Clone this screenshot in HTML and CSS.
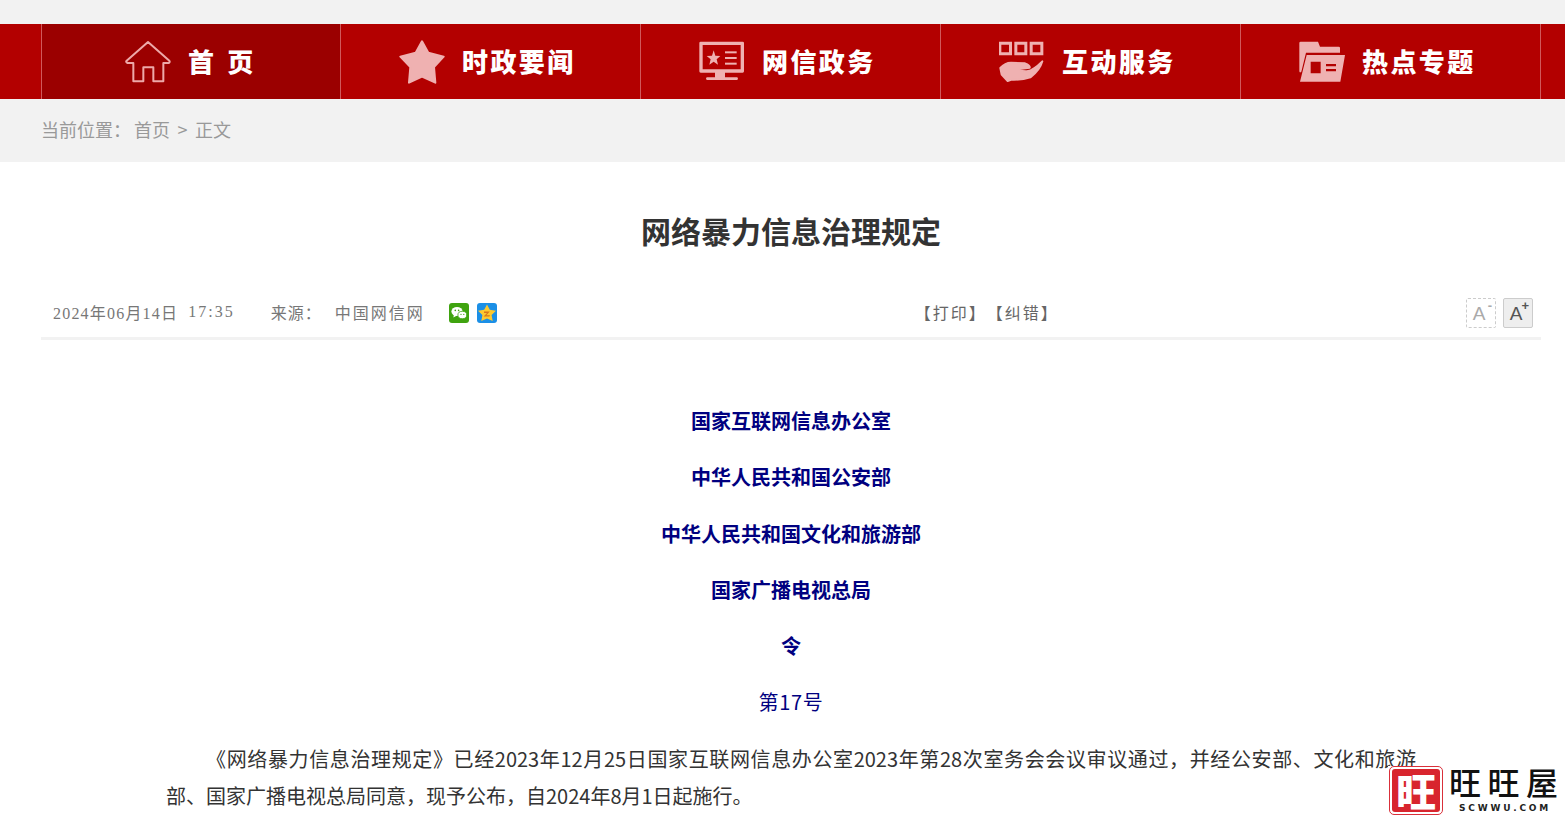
FILE: index.html
```html
<!DOCTYPE html>
<html lang="zh-CN">
<head>
<meta charset="utf-8">
<title>网络暴力信息治理规定</title>
<link rel="stylesheet" href="styles.css">
</head>
<body>
<div class="topband"></div>
<nav class="nav">
  <ul class="nav-list">
    <li class="nav-item nav-item--home">
      <svg class="nav-icon" viewBox="45 30 138 132"><path class="ico-line" d="M114 36 L178 92 Q181 97 176 99 L160 99 L160 154 L130 154 L130 112 L100 112 L100 154 L70 154 L70 99 L53 99 Q46 96 50 92 Z"/></svg>
      <span class="nav-text nav-text--wide">首 页</span>
    </li>
    <li class="nav-item">
      <svg class="nav-icon" viewBox="27 30 138 132"><path class="ico-fill ico-round" d="M96 34 L115 68 L161 80 L132 111 L136 158 L96 140 L57 158 L61 111 L31 80 L77 68 Z"/></svg>
      <span class="nav-text">时政要闻</span>
    </li>
    <li class="nav-item">
      <svg class="nav-icon" viewBox="27 30 138 132">
        <path class="ico-fill" fill-rule="evenodd" d="M32 35 H158 Q162 35 162 39 V124 Q162 128 158 128 H105 V142 H142 Q146 145 142 150 H50 Q46 145 50 142 H75 V128 H32 Q28 128 28 124 V39 Q28 35 32 35 Z M38 45 V118 H152 V45 Z"/>
        <path class="ico-fill" d="M71 61 L76 77 L91 78 L80 88 L84 104 L71 95 L58 104 L62 88 L50 78 L66 77 Z"/>
        <rect class="ico-fill" x="105" y="64" width="35" height="6"/><rect class="ico-fill" x="105" y="81" width="35" height="6"/><rect class="ico-fill" x="105" y="98" width="35" height="6"/>
      </svg>
      <span class="nav-text">网信政务</span>
    </li>
    <li class="nav-item">
      <svg class="nav-icon" viewBox="30 30 138 132">
        <path class="ico-fill" fill-rule="evenodd" d="M28 35 H69 V76 H28 Z M37 44 V67 H60 V44 Z M76 35 H115 V76 H76 Z M85 44 V67 H106 V44 Z M122 35 H163 V76 H122 Z M131 44 V67 H154 V44 Z"/>
        <path class="ico-fill ico-round" d="M34 114 Q48 98 66 98 L108 100 Q124 106 122 113 L92 117 Q98 125 114 124 Q134 120 160 94 Q152 122 124 142 Q100 150 68 149 L56 153 L38 134 Z"/>
      </svg>
      <span class="nav-text">互动服务</span>
    </li>
    <li class="nav-item">
      <svg class="nav-icon" viewBox="27 30 138 132">
        <path class="ico-fill" d="M32 35 H84 L90 50 H146 Q150 50 150 54 V68 H48 L34 125 Q29 130 28 124 V39 Q28 35 32 35 Z"/>
        <path class="ico-fill" fill-rule="evenodd" d="M50 75 H165 L151 155 H30 Z M62 95 V130 H92 V95 Z M108 102 V109 H138 V102 Z M108 117 V124 H138 V117 Z"/>
      </svg>
      <span class="nav-text">热点专题</span>
    </li>
  </ul>
</nav>
<div class="crumbs">当前位置：<span class="crumbs-path">首页 &gt; 正文</span></div>
<main class="article">
  <h1 class="title">网络暴力信息治理规定</h1>
  <div class="meta">
    <span class="meta-text meta-date">2024年06月14日</span>
    <span class="meta-text meta-time">17:35</span>
    <span class="meta-text meta-label">来源：</span>
    <span class="meta-text meta-source">中国网信网</span>
    <svg class="share share--wx" viewBox="0 0 20 20">
      <rect width="20" height="20" rx="3" fill="#3fa30f"/>
      <ellipse cx="8" cy="8.5" rx="5.6" ry="4.6" fill="#fff"/>
      <path d="M5 11 L4.4 14.6 L8 12.5 Z" fill="#fff"/>
      <ellipse cx="13.3" cy="12" rx="4.4" ry="3.7" fill="#fff" stroke="#3fa30f" stroke-width="0.8"/>
      <circle cx="6.3" cy="7.4" r="0.8" fill="#3fa30f"/><circle cx="9.6" cy="7.4" r="0.8" fill="#3fa30f"/>
      <circle cx="12" cy="11.4" r="0.6" fill="#3fa30f"/><circle cx="14.8" cy="11.4" r="0.6" fill="#3fa30f"/>
    </svg>
    <svg class="share share--qz" viewBox="0 0 20 20">
      <rect width="20" height="20" rx="3" fill="#1b8fe6"/>
      <path d="M10 1.6 L12.8 6.8 L19 7.8 L14.6 12 L15.7 18 L10 15.4 L4.3 18 L5.4 12 L1 7.8 L7.2 6.8 Z" fill="#fdc92f"/>
      <path d="M7 8.6 H12.8 L9.4 12.2 H13 L12.4 13.6 H6.6 L10 10 H7 Z" fill="#d8771a"/>
    </svg>
    <span class="meta-text meta-print">【打印】【纠错】</span>
    <div class="sizer">
      <span class="size-btn size-btn--minus">A<span class="size-mark">-</span></span>
      <span class="size-btn size-btn--plus">A<span class="size-mark">+</span></span>
    </div>
  </div>
  <div class="body">
    <p class="center strong">国家互联网信息办公室</p>
    <p class="center strong">中华人民共和国公安部</p>
    <p class="center strong">中华人民共和国文化和旅游部</p>
    <p class="center strong">国家广播电视总局</p>
    <p class="center strong">令</p>
    <p class="center order">第17号</p>
    <p class="para">《网络暴力信息治理规定》已经2023年12月25日国家互联网信息办公室2023年第28次室务会会议审议通过，并经公安部、文化和旅游部、国家广播电视总局同意，现予公布，自2024年8月1日起施行。</p>
  </div>
</main>
<aside class="mark">
  <span class="mark-stamp"><span class="mark-glyph">旺</span></span>
  <span class="mark-words">
    <span class="mark-name">旺旺屋</span>
    <span class="mark-url">SCWWU.COM</span>
  </span>
</aside>
</body>
</html>
```
FILE: styles.css
```css
* { box-sizing: border-box; }
html, body { margin: 0; padding: 0; }
body {
  height: 818px;
  overflow: hidden;
  position: relative;
  background: #fff;
  font-family: "Noto Sans CJK SC", "Liberation Sans", sans-serif;
  color: #333;
}
.topband { height: 24px; background: #f2f2f2; }
.nav { height: 75px; background: #b30000; }
.nav-list {
  display: flex;
  list-style: none;
  margin: 0 0 0 41px;
  padding: 0;
  width: 1500px;
  height: 75px;
}
.nav-item {
  flex: 0 0 300px;
  display: flex;
  align-items: center;
  gap: 17px;
  padding-left: 58px;
  border-right: 1px solid #d0595b;
}
.nav-item--home {
  padding-left: 83px;
  background: #9b0000;
  border-left: 1px solid #d0595b;
}
.nav-icon { width: 46px; height: 44px; flex: none; }
.ico-fill { fill: #efb1b1; }
.ico-round { stroke: #efb1b1; stroke-width: 6; stroke-linejoin: round; }
.ico-line { fill: none; stroke: #eda9a9; stroke-width: 6; stroke-linejoin: round; }
.nav-text {
  color: #fff;
  font-size: 26px;
  font-weight: 900;
  letter-spacing: 2.4px;
  line-height: 1;
  white-space: nowrap;
  margin-bottom: 2px;
}
.nav-text--wide { word-spacing: 2.5px; }
.crumbs {
  height: 63px;
  background: #f2f2f2;
  padding-left: 41px;
  font-size: 18px;
  line-height: 60px;
  color: #999;
}
.crumbs-path { margin-left: 3px; word-spacing: 3.5px; }
.article { margin-left: 41px; width: 1500px; }
.title {
  margin: 48px 0 47px;
  font-size: 30px;
  line-height: 40px;
  font-weight: 700;
  text-align: center;
  color: #333;
}
.meta {
  display: flex;
  align-items: center;
  height: 43px;
  padding: 0 8px 9px 12px;
  border-bottom: 3px solid #f2f2f2;
  font-family: "Liberation Serif", "Noto Sans CJK SC", serif;
  font-size: 16px;
  letter-spacing: 1px;
  color: #777;
}
.meta-text { margin-bottom: 2px; }
.meta-date { letter-spacing: 1.2px; }
.meta-time { margin-left: 10px; letter-spacing: 2px; }
.meta-label { margin-left: 36px; }
.meta-source { margin-left: 13px; letter-spacing: 2px; }
.share { width: 20px; height: 20px; flex: none; }
.share--wx { margin-left: 24px; }
.share--qz { margin-left: 8px; }
.meta-print {
  margin-left: 418px;
  letter-spacing: 2px;
  color: #666;
  text-spacing-trim: space-all;
  font-kerning: none;
}
.sizer { margin-left: auto; display: flex; gap: 7px; }
.size-btn {
  position: relative;
  width: 30px;
  height: 30px;
  display: flex;
  align-items: center;
  justify-content: center;
  font-family: "Liberation Sans", sans-serif;
  font-size: 19px;
  letter-spacing: 0;
  padding: 3px 4px 0 0;
  border-radius: 2px;
}
.size-btn--minus { border: 1px dashed #ccc; color: #aaa; }
.size-btn--plus { border: 1px solid #ccc; background: #eee; color: #555; }
.size-mark {
  position: absolute;
  top: 1px;
  right: 3px;
  font-size: 13px;
  font-weight: 700;
  line-height: 12px;
}
.body { margin-top: 62px; padding: 0 125px; font-size: 20px; line-height: 37px; color: #333; }
.body p { margin: 0 0 19.27px; }
.center { text-align: center; }
.strong { font-weight: 700; color: #000080; }
.order { color: #000080; letter-spacing: 0.7px; }
.body .para { text-indent: 40px; text-align: justify; }
.mark {
  position: absolute;
  right: 0;
  bottom: 0;
  width: 177px;
  height: 52px;
  display: flex;
  background: #fff;
}
.mark-stamp {
  flex: none;
  width: 54px;
  height: 49px;
  margin-left: 1px;
  padding: 2px;
  border: 1px solid #d9303a;
  border-radius: 5px;
  display: flex;
}
.mark-glyph {
  flex: 1;
  background: #d8252e;
  border-radius: 3px;
  color: #fff;
  font-size: 40px;
  font-weight: 900;
  line-height: 42px;
  text-align: center;
}
.mark-words { flex: none; display: flex; flex-direction: column; margin-left: 6px; }
.mark-name {
  font-size: 32px;
  font-weight: 500;
  line-height: 31px;
  letter-spacing: 6.5px;
  color: #111;
  white-space: nowrap;
}
.mark-url {
  font-family: "DejaVu Sans", sans-serif;
  font-size: 9px;
  font-weight: 700;
  line-height: 12px;
  letter-spacing: 2.8px;
  margin: 5px 0 0 10px;
  color: #222;
}
```
